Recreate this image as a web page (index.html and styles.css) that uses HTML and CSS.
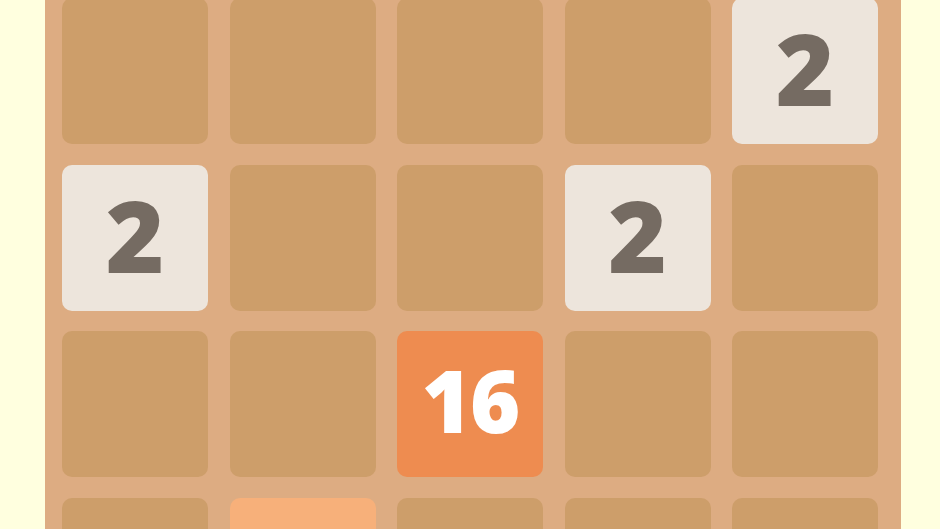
FILE: index.html
```html
<!DOCTYPE html>
<html lang="en">
<head>
  <meta charset="UTF-8" />
  <meta name="viewport" content="width=device-width, initial-scale=1.0"/>
  <title>2048</title>
  <link rel="stylesheet" href="styles.css">
</head>
<body>

  <div class="board">
    <div class="cell"></div>
    <div class="cell"></div>
    <div class="cell"></div>
    <div class="cell"></div>
    <div class="cell tile-2">2</div>

    <div class="cell tile-2">2</div>
    <div class="cell"></div>
    <div class="cell"></div>
    <div class="cell tile-2">2</div>
    <div class="cell"></div>

    <div class="cell"></div>
    <div class="cell"></div>
    <div class="cell tile-16">16</div>
    <div class="cell"></div>
    <div class="cell"></div>

    <div class="cell"></div>
    <div class="cell tile-8">8</div>
    <div class="cell"></div>
    <div class="cell"></div>
    <div class="cell"></div>
  </div>

</body>
</html>
```

FILE: styles.css
```css
body {
  margin: 0;
  background-color: #ffffdf;
  font-family: 'Open Sans', 'Liberation Sans', sans-serif;
  overflow: hidden;
}
.board {
  display: inline-grid;
  grid-template-columns: repeat(5, 146px);
  grid-auto-rows: 146px;
  column-gap: 21.5px;
  row-gap: 20.5px;
  margin: -19px 0 0 45px;
  padding: 17px 23px 17px 17px;
  background-color: #ddac82;
}
.cell {
  background-color: #cd9e6a;
  border-radius: 10px;
  display: flex;
  justify-content: center;
  align-items: center;
  padding-bottom: 8px;
  box-sizing: border-box;
  font-weight: 800;
  line-height: 1;
}
.tile-2 {
  background-color: #ede5dc;
  color: #756b62;
  font-size: 100px;
}
.tile-8 {
  background-color: #f7b07a;
  color: #fff;
  font-size: 100px;
}
.tile-16 {
  background-color: #ee8c50;
  color: #fff;
  font-size: 86px;
  letter-spacing: -2px;
}
```
